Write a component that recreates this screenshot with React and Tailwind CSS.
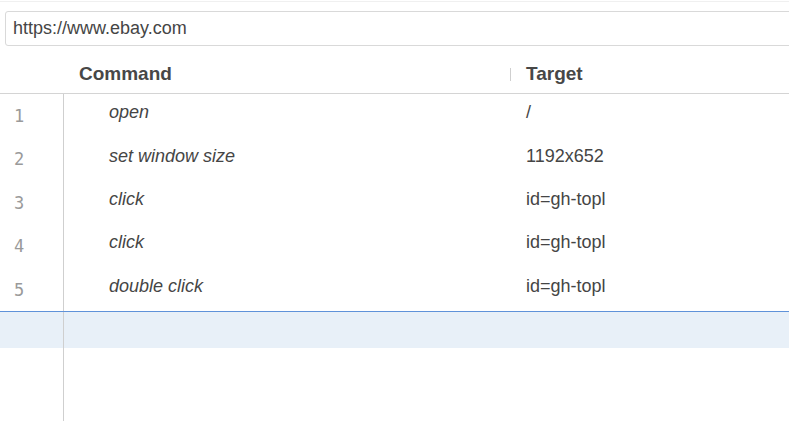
const commands = [
  { id: 1, command: 'open', target: '/' },
  { id: 2, command: 'set window size', target: '1192x652' },
  { id: 3, command: 'click', target: 'id=gh-topl' },
  { id: 4, command: 'click', target: 'id=gh-topl' },
  { id: 5, command: 'double click', target: 'id=gh-topl' },
];

export default function App() {
  return (
    <div className="h-[421px] w-[789px] overflow-hidden bg-white flex flex-col text-[#454545] font-['Liberation_Sans',Arial,sans-serif]">
      <div className="mt-[1px] h-[1px] bg-[#f0f0f0]" />
      <div className="mt-[9px] pl-[5px]">
        <div className="w-[820px] h-[35px] border border-[#d9d9d9] rounded-[3px] flex items-center pl-[7px] text-[18px]">
          https://www.ebay.com
        </div>
      </div>

      <div className="mt-[9px] h-[39px] border-b border-[#d4d4d4] flex items-center font-bold text-[19px] text-[#474747]">
        <div className="w-[79px]" />
        <div className="w-[431px]">Command</div>
        <div className="w-[1px] h-[13px] bg-[#cfcfcf]" />
        <div className="pl-[15px]">Target</div>
      </div>

      <div>
        {commands.map((row) => (
          <div key={row.id} className="flex h-[43.4px]">
            <div className="w-[64px] shrink-0 border-r border-[#cfcfcf] flex items-center pl-[14px] pt-[2px] text-[17px] text-[#9a9a9a] font-['DejaVu_Sans_Mono',monospace]">
              {row.id}
            </div>
            <div className="w-[462px] shrink-0 pl-[45px] flex items-center pb-[6px] italic text-[18px]">
              {row.command}
            </div>
            <div className="flex items-center pb-[6px] text-[18px]">{row.target}</div>
          </div>
        ))}
      </div>

      <div className="flex h-[37px] border-t border-[#5f92d9] bg-[#e8f0f8]">
        <div className="w-[64px] border-r border-[#cfcfcf]" />
      </div>

      <div className="flex flex-1">
        <div className="w-[64px] border-r border-[#cfcfcf]" />
      </div>
    </div>
  );
}
